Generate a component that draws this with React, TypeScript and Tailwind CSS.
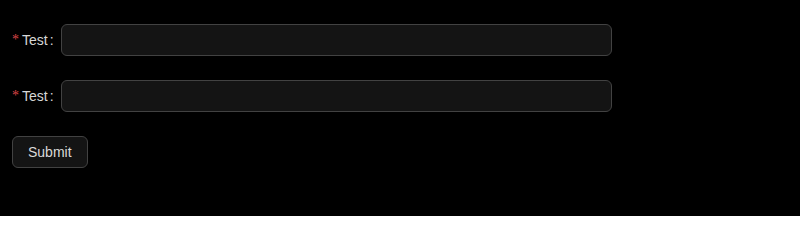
import React from "react";

function Row() {
  return (
    <div className="flex items-center h-8 mb-6">
      <label className="flex items-center h-8 text-[14px] text-[rgba(255,255,255,0.85)] whitespace-nowrap">
        <span className="text-[#dc4446] text-[14px] leading-none mr-[3px] font-['Liberation_Serif',serif]">*</span>
        <span>Test</span>
        <span className="ml-[2px] mr-[7px]">:</span>
      </label>
      <input className="w-[551px] h-8 rounded-md bg-[#141414] border border-[#424242] px-[11px] text-[14px] text-[rgba(255,255,255,0.85)] outline-none" />
    </div>
  );
}

export default function App() {
  return (
    <div className="h-[216px] overflow-hidden bg-black pt-6 px-3 font-['Liberation_Sans',Arial,sans-serif]">
      <Row />
      <Row />
      <button className="h-8 px-[15px] rounded-md bg-[#141414] border border-[#424242] text-[14px] text-[rgba(255,255,255,0.85)] shadow-[0_2px_0_rgba(0,0,0,0.02)]">
        Submit
      </button>
    </div>
  );
}
